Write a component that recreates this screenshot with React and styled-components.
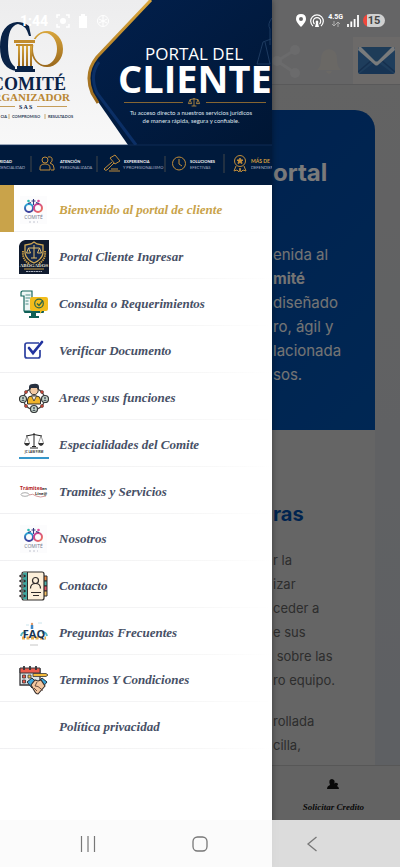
import React, { useState } from "react";
import styled, { createGlobalStyle } from "styled-components";

const GlobalStyle = createGlobalStyle`
  * {
    box-sizing: border-box;
  }
  body {
    margin: 0;
    font-family: "Inter", sans-serif;
  }
  button {
    border: 0;
    padding: 0;
    background: none;
    font: inherit;
    cursor: pointer;
  }
`;

const script = `"Liberation Serif", serif`;

const Screen = styled.div`
  position: relative;
  height: 100vh;
  overflow: hidden;
`;

/* ---------- page under the drawer ---------- */

const Page = styled.div`
  display: flex;
  flex-direction: column;
  height: 100%;
  padding-bottom: 47px;
  background: #c6c6c7;
`;

const Header = styled.header`
  display: flex;
  justify-content: flex-end;
  align-items: center;
  gap: 7px;
  height: 85px;
  padding-top: 37px;
  flex-shrink: 0;
  background: #cacacc;
  border-bottom: 1px solid #b2b2b4;
`;

const HeaderButton = styled.button`
  display: flex;
  align-items: center;
  justify-content: center;
  width: ${(p) => (p.$boxed ? "47px" : "34px")};
  height: 47px;
  background: ${(p) => (p.$boxed ? "#d8d4d2" : "none")};
`;

const Main = styled.main`
  flex: 1;
  min-height: 0;
  overflow: hidden;
  padding: 25px 25px 0;
  background: linear-gradient(#c6c6c7, #bcc0c6);
`;

/* both sections keep their text in the strip beside the drawer */
const Hero = styled.section`
  min-height: 320px;
  padding: 44px 0 0 calc(68vw - 24px);
  border-radius: 20px 20px 0 0;
  background: linear-gradient(135deg, #003f98, #004fa8);
  color: #e8e8e8;
`;

const HeroTitle = styled.h1`
  margin: 0 0 51px;
  font-size: 24px;
  line-height: 38px;
  color: #f4f4f4;
`;

const HeroText = styled.p`
  margin: 0;
  font-size: 15px;
  line-height: 24px;
`;

const Line = styled.span`
  display: block;
  white-space: pre;
`;

const Article = styled.section`
  min-height: 600px;
  padding: 68px 0 0 calc(68vw - 24px);
  background: #cacaca;
  color: #5a5a5a;
`;

const ArticleTitle = styled.h2`
  margin: 0 0 18px;
  font-size: 20px;
  line-height: 32px;
  color: #00499f;
`;

const ArticleText = styled.p`
  margin: 0 0 17px;
  font-size: 13px;
  line-height: 24px;
`;

const BottomNav = styled.nav`
  display: grid;
  grid-template-columns: repeat(3, 1fr);
  height: 55px;
  flex-shrink: 0;
  background: #c6c6c6;
  border-top: 1px solid #aeaeae;
`;

const BottomLink = styled.a`
  grid-column: 3;
  display: flex;
  flex-direction: column;
  align-items: center;
  gap: 12px;
  padding-top: 13px;
  font-family: ${script};
  font-size: 9px;
  font-weight: bold;
  font-style: italic;
  line-height: 12px;
  color: #101010;
  text-decoration: none;
`;

const Backdrop = styled.div`
  position: absolute;
  inset: 0;
  background: rgba(0, 0, 0, 0.5);
`;

/* ---------- drawer ---------- */

const Drawer = styled.aside`
  position: absolute;
  top: 0;
  bottom: 0;
  left: 0;
  width: 68%;
  overflow: hidden;
  background: #fff;
  box-shadow: 0 0 6px rgba(0, 0, 0, 0.4);
`;

const Banner = styled.svg`
  display: block;
  width: 100%;
  height: 185px;
`;

const Menu = styled.ul`
  list-style: none;
  margin: 0;
  padding: 0;
`;

const MenuItem = styled.li`
  height: 47px;
  border-left: 14px solid ${(p) => (p.$active ? "#c9a34a" : "transparent")};
  background: linear-gradient(90deg, #f0f0f2, #f6f6f6 70%, #fff) bottom / 100% 1px
    no-repeat border-box;
`;

const MenuLink = styled.a`
  display: flex;
  align-items: center;
  gap: 10px;
  height: 100%;
  padding: 2px 0 0 5px;
  font-family: ${script};
  font-size: 13px;
  font-weight: bold;
  font-style: italic;
  line-height: 20px;
  color: ${(p) => (p.$active ? "#c9a34a" : "#475066")};
  text-decoration: none;
  white-space: nowrap;
`;

const IconBox = styled.span`
  display: flex;
  width: 30px;
  height: 34px;
  align-items: center;
  flex-shrink: 0;
  font-style: normal;
  font-weight: normal;
`;

/* ---------- device bars ---------- */

const StatusBar = styled.div`
  position: absolute;
  top: 0;
  left: 0;
  right: 0;
  display: flex;
  align-items: center;
  justify-content: space-between;
  height: 41px;
  padding: 0 15px 0 20px;
  color: #fff;
`;

const StatusGroup = styled.div`
  display: flex;
  align-items: center;
  gap: ${(p) => p.$gap}px;
`;

const Clock = styled.span`
  font-family: "Roboto", sans-serif;
  font-size: 14px;
  font-weight: bold;
`;

const Network = styled.span`
  display: flex;
  flex-direction: column;
  align-items: center;
  font-family: "Roboto", sans-serif;
  font-size: 7px;
  font-weight: bold;
  line-height: 7px;
`;

const Battery = styled.span`
  width: 22px;
  height: 13px;
  border-radius: 7px;
  background: linear-gradient(90deg, #f0473c 4px, #d0d0d0 4px);
  color: #444;
  font-family: "Roboto", sans-serif;
  font-size: 11px;
  font-weight: bold;
  line-height: 13px;
  text-align: center;
`;

const SystemNav = styled.div`
  position: absolute;
  left: 0;
  right: 0;
  bottom: 0;
  display: flex;
  align-items: center;
  justify-content: space-around;
  height: 47px;
  padding: 0 32px;
  background: rgba(250, 250, 250, 0.8);
`;

const SystemButton = styled.button`
  display: flex;
  align-items: center;
  justify-content: center;
  width: 48px;
  height: 47px;
`;

/* ---------- menu pictures ---------- */

const Svg = ({ children, size = 30, h }) => (
  <svg width={size} height={h || size} viewBox={`0 0 ${size} ${h || size}`} fill="none" aria-hidden="true">
    {children}
  </svg>
);

const ComiteIcon = () => (
  <Svg>
    <defs>
      <linearGradient id="cg1" x1="0" x2="0" y1="0" y2="1">
        <stop offset="0" stopColor="#2aa9d8" />
        <stop offset="1" stopColor="#3d3a98" />
      </linearGradient>
      <linearGradient id="cg2" x1="0" x2="1" y1="0" y2="1">
        <stop offset="0" stopColor="#c0389e" />
        <stop offset="1" stopColor="#f0745a" />
      </linearGradient>
    </defs>
    <rect x="1" y="1" width="27" height="28" fill="#fcfcfd" />
    <circle cx="10" cy="13" r="4" stroke="url(#cg1)" strokeWidth="2" />
    <circle cx="19" cy="13" r="4" stroke="url(#cg2)" strokeWidth="2" />
    <circle cx="9.500" cy="6" r="1.300" fill="#2cb8b0" />
    <circle cx="19.500" cy="6" r="1.300" fill="#e04a9c" />
    <path d="M14.500 4v6M12.500 6h4M9 8.500l3-1M20 8.500l-3-1" stroke="#343a80" strokeWidth="1.100" />
    <text x="14.500" y="23.500" textAnchor="middle" fontFamily="Open Sans" fontSize="5" fill="#70758a">COMITÉ</text>
    <path d="M10 27h2M14 27h2M18 27h1" stroke="#b4b8c4" strokeWidth=".8" />
  </Svg>
);

const AbogadosIcon = () => (
  <Svg h={34}>
    <path d="M6 0h24v34H0V6q1-5 6-6z" fill="#101b2e" />
    <path d="M15 2l3 2 6 1v7q0 7-9 11-9-4-9-11V5l6-1z" fill="#14284b" stroke="#d2aa54" strokeWidth="1.300" />
    <path d="M15 5v13M9.500 8h11M12 18h6M9.500 8l-2 5h4zM20.500 8l-2 5h4z" stroke="#e0bd6a" strokeWidth="1" />
    <path d="M4 11q-1 9 7 13M26 11q1 9-7 13" stroke="#c79c44" strokeWidth="2" strokeDasharray="1.500 .7" />
    <text x="15" y="27" textAnchor="middle" fontFamily="Liberation Serif" fontWeight="bold" fontSize="5" fill="#e7e1d0">ABOGADOS</text>
    <path d="M5 29h20" stroke="#c79c44" />
    <path d="M7 31.500h16" stroke="#aab0bc" strokeDasharray="2 .5" />
  </Svg>
);

const ConsultaIcon = () => (
  <Svg>
    <path d="M5 10v13q0 1 1 1h18q1 0 1-1v-2H5z" fill="#0f5f55" />
    <path d="M12 24h5v3h3v2h-10v-2h2z" fill="#0f5f55" />
    <path d="M3 2h10v20H5V7H2V4q0-2 2-2z" fill="#eef6f5" stroke="#16675e" strokeWidth="1.200" />
    <path d="M6.500 6h5M6.500 9h5M6.500 12h3M6.500 15h3" stroke="#4a8d86" />
    <path d="M13 8h14q2 0 2 2v10q0 2-2 2h-4l-2 3v-3h-8q-2 0-2-2V10q0-2 2-2z" fill="#f2bc1b" />
    <circle cx="20" cy="14.500" r="4.300" stroke="#2e6647" strokeWidth="1.200" />
    <path d="M18 14.500l2 2 4-5" stroke="#2e6647" strokeWidth="1.400" />
  </Svg>
);

const VerificarIcon = () => (
  <Svg>
    <path d="M20 7H8q-2 0-2 2v11q0 2 2 2h11q2 0 2-2v-6" stroke="#2b3fa0" strokeWidth="1.700" />
    <path d="M10 12l4 5 9-11" stroke="#2234a0" strokeWidth="2.700" strokeLinecap="round" />
  </Svg>
);

const AreasIcon = () => (
  <Svg>
    <circle cx="15" cy="16" r="10.500" stroke="#42423f" strokeWidth="1.200" />
    <path d="M8.500 21v-4q0-4 4-4h5q4 0 4 4v4z" fill="#f0b429" stroke="#33302a" />
    <path d="M12.500 13l2.500 5 2.500-5z" fill="#f7eee0" stroke="#33302a" strokeWidth=".8" />
    <circle cx="15" cy="7.500" r="4.200" fill="#f3c9a2" stroke="#33302a" />
    <path d="M10 7V4q0-3 4-3 6-1 6 3v3l-2-2h-6z" fill="#27303f" />
    {[[4, 16], [26, 16], [15, 26]].map(([x, y]) => (
      <g key={x}>
        <circle cx={x} cy={y} r="3.500" fill="#c4d4c8" stroke="#35393a" strokeWidth="1.200" />
        <circle cx={x} cy={y - 1} r="1" fill="#4b5560" />
        <path d={`M${x - 1.8} ${y + 2}q1.800-3 3.600 0`} fill="#4b5560" />
      </g>
    ))}
    {[[7, 9], [23, 9], [7, 23], [23, 23]].map(([x, y]) => (
      <circle key={`${x}-${y}`} cx={x} cy={y} r="1.500" fill="#d94a3a" stroke="#4a302c" strokeWidth=".6" />
    ))}
  </Svg>
);

const EspecialidadesIcon = () => (
  <Svg>
    <path d="M15 3v14M7 6q8-3 16 0M11 18h8M13 16.500h4" stroke="#222" strokeWidth="1" />
    <path d="M8 6L5.500 13M8 6l2.500 7M22 6l-2.500 7M22 6l2.500 7" stroke="#555" strokeWidth=".6" />
    <path d="M5 13h6q-1 3-3 3t-3-3zM19 13h6q-1 3-3 3t-3-3z" fill="#333" />
    <text x="15" y="23" textAnchor="middle" fontFamily="Open Sans" fontSize="3" fontWeight="bold" fill="#333">JC LAW FIRM</text>
    <path d="M0 28h30" stroke="#3697cb" strokeWidth="2" />
  </Svg>
);

const TramitesIcon = () => (
  <Svg>
    <text x="1" y="13" fontFamily="Open Sans" fontSize="5" fontWeight="bold" fill="#b32222">Trámites</text>
    <text x="23" y="13" fontFamily="Open Sans" fontSize="4" fontWeight="bold" fill="#262626">en</text>
    <text x="16" y="18" fontFamily="Open Sans" fontSize="4" fontWeight="bold" fill="#262626">Líne@</text>
    <ellipse cx="6" cy="17.500" rx="4" ry="1.800" stroke="#a3a3a3" strokeWidth=".9" />
    <path d="M10 18q4-2 7 1 4 2 10 0" stroke="#cf8f8f" strokeWidth=".9" />
  </Svg>
);

const ContactoIcon = () => (
  <Svg>
    <path d="M24 5h4v5h-4z" fill="#ed8b42" stroke="#2f2c2b" />
    <path d="M24 10h4v5h-4z" fill="#4db0a9" stroke="#2f2c2b" />
    <path d="M24 15h4v5h-4z" fill="#e65464" stroke="#2f2c2b" />
    <path d="M24 20h4v5h-4z" fill="#f2bd62" stroke="#2f2c2b" />
    <path d="M5 1h18q2 0 2 2v24q0 2-2 2H5q-2 0-2-2V3q0-2 2-2z" fill="#fdf0da" stroke="#2f2c2b" strokeWidth="1.200" />
    <path d="M4 1.600h4v26.800H4z" fill="#3fa79f" />
    <path d="M8.500 1v28" stroke="#2f2c2b" />
    <path d="M1.500 5h4M1.500 10h4M1.500 15h4M1.500 20h4M1.500 25h4" stroke="#2f2c2b" strokeWidth="2.400" strokeLinecap="round" />
    <path d="M2 5h3M2 10h3M2 15h3M2 20h3M2 25h3" stroke="#a9d7d2" strokeWidth=".8" />
    <circle cx="16.500" cy="9.500" r="3" stroke="#2f2c2b" strokeWidth="1.200" />
    <path d="M11.500 17.500q0-5 5-5t5 5M12 21.500h10M14 24.500h6" stroke="#2f2c2b" strokeWidth="1.200" />
  </Svg>
);

const FaqIcon = () => (
  <Svg>
    <path d="M2 18q1-5 5-3M28 18q-1-5-5-3" stroke="#58b7c5" strokeWidth="2" />
    <path d="M3 20h24" stroke="#e8ad4c" strokeWidth="3" strokeDasharray="3 1.500" />
    <circle cx="13" cy="6" r="1.200" fill="#e09a6a" />
    <path d="M13 7v4" stroke="#3d87c6" strokeWidth="2.500" />
    <path d="M7 7h3M19 5h4" stroke="#cbe4ec" />
    <text x="15" y="20" textAnchor="middle" fontFamily="Open Sans" fontWeight="bold" fontSize="11" fill="#193454">FAQ</text>
    <path d="M11 27h8" stroke="#b8b8b8" strokeWidth=".8" />
  </Svg>
);

const TerminosIcon = () => (
  <Svg>
    <path d="M1 4h20v16H1z" fill="#dfe5e8" stroke="#37373b" strokeWidth="1.300" />
    <path d="M1 3h20v5H1z" fill="#ec5b4c" stroke="#37373b" />
    <path d="M5 1v4M11 1v4M17 1v4" stroke="#37373b" strokeWidth="1.800" />
    <path d="M3.500 10h3v3h-3zM3.500 15h3v3h-3z" fill="#e8584a" stroke="#37373b" strokeWidth=".8" />
    <path d="M9 10h3v3H9z" fill="#f6c650" stroke="#37373b" strokeWidth=".8" />
    <path d="M14 8.500h13l2 1.500-2 1.500H14z" fill="#f2b93a" stroke="#37373b" strokeWidth=".8" />
    <path d="M8 17l5-4 4 4-4 6zM28 17l-5-4-4 4 4 6z" fill="#3ba6db" stroke="#27313a" />
    <path d="M12 20l4-5 3 1 3-1 4 6-7 8q-2 0-3-2z" fill="#f3c7a0" stroke="#37302e" strokeWidth="1.100" />
    <path d="M18 17l-2 4 3 .5 5 4M15 23l3 3" stroke="#5b4237" strokeWidth=".9" />
  </Svg>
);

const Scales = ({ x, y, s = 1, color, w = 1 }) => (
  <g transform={`translate(${x} ${y}) scale(${s})`} stroke={color} strokeWidth={w} fill="none">
    <path d="M0-5v10M-3 5h6M-5-3q5-2 10 0M-5-3l-2 5h4zM5-3l-2 5h4z" />
  </g>
);

const BannerArt = () => (
  <Banner viewBox="0 0 272 185" preserveAspectRatio="xMinYMin slice" role="img" aria-label="Comité Organizador, Portal del Cliente">
    <defs>
      <linearGradient id="navy" x1="0" y1="0" x2="1" y2="1">
        <stop offset="0" stopColor="#02204d" />
        <stop offset="1" stopColor="#001634" />
      </linearGradient>
      <linearGradient id="paper" x1="0" y1="0" x2="0" y2="1">
        <stop offset="0" stopColor="#ededee" />
        <stop offset="1" stopColor="#fbfbfb" />
      </linearGradient>
      <linearGradient id="gold" x1="0" y1="0" x2="0" y2="1">
        <stop offset="0" stopColor="#d9a63c" />
        <stop offset="1" stopColor="#9a681c" />
      </linearGradient>
    </defs>
    <rect width="272" height="185" fill="url(#paper)" />
    <path d="M151 0L97 57Q84 73 92 93L128 145H272V0z" fill="url(#navy)" />
    <path d="M99 62Q89 75 97 93L136 145" fill="none" stroke="#0b2f66" strokeWidth="3" />
    <path d="M151 0L97 57Q84 73 92 93L98 103" fill="none" stroke="url(#gold)" strokeWidth="3" />
    <g fill="none" stroke="#1d3a60" strokeWidth="1">
      <path d="M272 18q-5 6-2 11v16M263 42l-6 22h13l-5-22M263 42l8-3" />
    </g>

    {/* logo */}
    <path d="M31 36L29 26Q24 22 17 22 0 24 0 47 0 69 17 71V68Q8 64 8 46 8 26 18 24 26 25 29 36z" fill="#0a2347" />
    <path d="M47 31a16 18 0 010 36 16 18 0 010-36zM45 33a12 16 0 000 32 12 16 0 000-32z" fill="url(#gold)" fillRule="evenodd" />
    <path d="M14 39h22l-2 6h-2v22h3v5H15v-5h3V45h-2z" fill="#f1f1f2" />
    <path d="M14 40h21v3H14zM16 44h17v2H16z" fill="#c18b2d" />
    <path d="M19 46v20M23 46v20M27 46v20M31 46v20" stroke="url(#gold)" strokeWidth="2" />
    <path d="M17 66h16v3h2v3H15v-3h2z" fill="#0a2347" />
    <g fontFamily="Liberation Serif">
      <text x="66" y="90" textAnchor="end" fontSize="18" fontWeight="bold" fill="#0a2347">COMITÉ</text>
      <text x="70" y="101" textAnchor="end" fontSize="11" fontWeight="bold" fill="#b98632">RGANIZADOR</text>
      <text x="19" y="109" fontSize="6" fontWeight="bold" fill="#0a2347">S A S</text>
    </g>
    <path d="M0 106.500h15M37 106.500h30" stroke="#b98632" strokeWidth=".8" />
    <g fontFamily="Lato" fontSize="4" fontWeight="bold" fill="#2c3b55">
      <text x="7" y="118" textAnchor="end">CIA</text>
      <text x="12" y="118">COMPROMISO</text>
      <text x="48" y="118">RESULTADOS</text>
      <path d="M9 114v5M45 114v5" stroke="#b98632" strokeWidth=".7" />
    </g>

    <g fontFamily="Open Sans" fill="#fff">
      <text x="145" y="60" fontSize="17" fontWeight="500">PORTAL DEL</text>
      <text x="118" y="93" fontSize="38" fontWeight="bold">CLIENTE</text>
    </g>
    <g fontFamily="Lato" fontSize="6" fill="#dfe4ee" textAnchor="middle">
      <text x="191" y="115">Tu acceso directo a nuestros servicios jurídicos</text>
      <text x="191" y="123">de manera rápida, segura y confiable.</text>
    </g>
    <path d="M124 102.500h59M206 102.500h60" stroke="#a87a30" strokeWidth=".8" />
    <Scales x={194} y={102} s={0.8} color="#c89540" />

    {/* strip with the services */}
    <rect y="145" width="272" height="40" fill="#001a3c" />
    <path d="M0 145h272" stroke="#13315a" strokeWidth=".8" />
    <path d="M31 156v16M97 156v16M165 156v16M224 154v19" stroke="#53534b" strokeWidth=".8" />
    <g fill="none" stroke="#c08c3a" strokeWidth="1">
      <circle cx="45" cy="160" r="3" />
      <path d="M40 170v-2q0-4 5-4t5 4v2zM48 157q5-1 4 4-1 2-2 2 4 1 4 5v2h-3" />
      <path d="M110 158l5-3 5 6-5 3zM112 162l-8 7q1 2 3 1l7-7M109 171h11M111 169h7" />
      <circle cx="179" cy="163.500" r="6.500" />
      <path d="M179 159v5l3 2" />
      <circle cx="240" cy="161" r="5.500" />
      <path d="M236 166l-2 5 3-1 2 2 1-4 1 4 2-2 3 1-2-5" />
      <path d="M240 158l1 2h2l-1.500 1.500.5 2-2-1-2 1 .5-2L237 160h2z" fill="#c08c3a" />
    </g>
    <g fontFamily="Lato" fontSize="4" fill="#aab4c6">
      <g fontWeight="bold" fill="#f3f5f8">
        <text x="12" y="163" textAnchor="end">RIDAD</text>
        <text x="60" y="163">ATENCIÓN</text>
        <text x="124" y="163">EXPERIENCIA</text>
        <text x="190" y="163">SOLUCIONES</text>
        <text x="251" y="163" fontSize="5" fill="#dda33c">MÁS DE</text>
      </g>
      <text x="25" y="169" textAnchor="end">DENCIALIDAD</text>
      <text x="60" y="169">PERSONALIZADA</text>
      <text x="123" y="169">Y PROFESIONALISMO</text>
      <text x="190" y="169">EFECTIVAS</text>
      <text x="251" y="169">DEFENDIEN</text>
    </g>
  </Banner>
);

const items = [
  { label: "Bienvenido al portal de cliente", icon: <ComiteIcon /> },
  { label: "Portal Cliente Ingresar", icon: <AbogadosIcon /> },
  { label: "Consulta o Requerimientos", icon: <ConsultaIcon /> },
  { label: "Verificar Documento", icon: <VerificarIcon /> },
  { label: "Areas y sus funciones", icon: <AreasIcon /> },
  { label: "Especialidades del Comite", icon: <EspecialidadesIcon /> },
  { label: "Tramites y Servicios", icon: <TramitesIcon /> },
  { label: "Nosotros", icon: <ComiteIcon /> },
  { label: "Contacto", icon: <ContactoIcon /> },
  { label: "Preguntas Frecuentes", icon: <FaqIcon /> },
  { label: "Terminos Y Condiciones", icon: <TerminosIcon /> },
  { label: "Política privacidad", icon: null },
];

function App() {
  const [active, setActive] = useState(0);

  return (
    <Screen>
      <GlobalStyle />
      <Page>
        <Header>
          <HeaderButton aria-label="Compartir">
            <Svg size={34}>
              <path d="M6 17L24 6M6 17l18 12" stroke="#d6d6d8" strokeWidth="3" />
              <circle cx="6" cy="17" r="5" fill="#d6d6d8" />
              <circle cx="24" cy="6" r="5" fill="#d6d6d8" />
              <circle cx="24" cy="29" r="5" fill="#d6d6d8" />
            </Svg>
          </HeaderButton>
          <HeaderButton aria-label="Notificaciones">
            <Svg size={28}>
              <path d="M14 2q8 1 8 10 0 8 4 11H2q4-3 4-11 0-9 8-10zM11 24h6q-1 3-3 3t-3-3z" fill="#d4d0cb" />
            </Svg>
          </HeaderButton>
          <HeaderButton $boxed aria-label="Mensajes">
            <Svg size={37} h={27}>
              <rect width="37" height="27" rx="2" fill="#3c7ab8" />
              <path d="M0 25l14-12M37 25L23 13" stroke="#2b5f9c" strokeWidth="1.500" />
              <path d="M1 27l17-13 18 13z" fill="#2e68a8" />
              <path d="M1 0h35l1 3-17 15q-1.500 1-3 0L0 3z" fill="#f2f6f8" />
              <path d="M3 0h31L20 14q-1.500 1-3 0z" fill="#3d78b0" />
            </Svg>
          </HeaderButton>
        </Header>
        <Main>
          <Hero>
            <HeroTitle>ortal</HeroTitle>
            <HeroText>
              <Line>enida al</Line>
              <Line>
                <b>mité</b>
              </Line>
              <Line>diseñado</Line>
              <Line>ro, ágil y</Line>
              <Line>lacionada</Line>
              <Line>sos.</Line>
            </HeroText>
          </Hero>
          <Article>
            <ArticleTitle>ras</ArticleTitle>
            <ArticleText>
              <Line>r la</Line>
              <Line>izar</Line>
              <Line>ceder a</Line>
              <Line>e sus</Line>
              <Line> sobre las</Line>
              <Line>ro equipo.</Line>
            </ArticleText>
            <ArticleText>
              <Line>rollada</Line>
              <Line>cilla,</Line>
            </ArticleText>
          </Article>
        </Main>
        <BottomNav>
          <BottomLink href="#credito">
            <Svg size={12} h={10}>
              <path d="M0 10q0-3 3-4Q1 0 5 0q4 1 2 5 1-2 3-1 2 1 0 3 2 1 2 3z" fill="#101010" />
            </Svg>
            Solicitar Credito
          </BottomLink>
        </BottomNav>
      </Page>
      <Backdrop />
      <Drawer>
        <BannerArt />
        <Menu>
          {items.map((item, i) => (
            <MenuItem key={item.label} $active={i === active}>
              <MenuLink href="#menu" $active={i === active} onClick={() => setActive(i)}>
                <IconBox>{item.icon}</IconBox>
                {item.label}
              </MenuLink>
            </MenuItem>
          ))}
        </Menu>
      </Drawer>
      <StatusBar>
        <StatusGroup $gap={8}>
          <Clock>1:44</Clock>
          <Svg size={14}>
            <path d="M1 4V1h3M10 1h3v3M13 10v3h-3M4 13H1v-3" stroke="#fff" strokeWidth="1.500" />
            <circle cx="7" cy="7" r="3" fill="#fff" />
          </Svg>
          <Svg size={10} h={14}>
            <path d="M3 0h4v2h2v12H1V2h2z" fill="#fff" />
          </Svg>
          <Svg size={14}>
            <circle cx="7" cy="7" r="5.500" stroke="#fff" />
            <path d="M3 5l8 4M11 5l-8 4M7 2v10" stroke="#fff" />
          </Svg>
        </StatusGroup>
        <StatusGroup $gap={4}>
          <Svg size={10} h={13}>
            <path d="M5 0q5 0 5 5 0 3-5 8-5-5-5-8 0-5 5-5zm0 3a2 2 0 100 4 2 2 0 000-4z" fill="#fff" fillRule="evenodd" />
          </Svg>
          <Svg size={14}>
            <path d="M3 12A6.300 6.300 0 1111 12" stroke="#fff" strokeWidth="1.200" />
            <path d="M4.500 10A3.700 3.700 0 119.500 10" stroke="#fff" strokeWidth="1.200" />
            <path d="M7 6.500a1.500 1.500 0 011 2.500l1 4H5l1-4a1.500 1.500 0 011-2.500z" fill="#fff" />
          </Svg>
          <Network>
            4.5G
            <Svg size={10} h={6}>
              <path d="M3 0v5M1 3l2 2 2-2M7 6V1M5 3l2-2 2 2" stroke="#b4b4b4" strokeWidth=".9" />
            </Svg>
          </Network>
          <Svg size={12}>
            <path d="M1 12V9M4.300 12V6.500M7.600 12V4M11 12V0" stroke="#fff" strokeWidth="1.800" />
          </Svg>
          <Battery>15</Battery>
        </StatusGroup>
      </StatusBar>
      <SystemNav>
        <SystemButton aria-label="Recientes">
          <Svg size={16}>
            <path d="M1.500 0v16M8 0v16M14.500 0v16" stroke="#777" strokeWidth="1.200" />
          </Svg>
        </SystemButton>
        <SystemButton aria-label="Inicio">
          <Svg size={16}>
            <rect x="1" y="1" width="14" height="14" rx="4.500" stroke="#777" strokeWidth="1.300" />
          </Svg>
        </SystemButton>
        <SystemButton aria-label="Atrás">
          <Svg size={16}>
            <path d="M12.500 1L4 8l8.500 7" stroke="#777" strokeWidth="1.300" />
          </Svg>
        </SystemButton>
      </SystemNav>
    </Screen>
  );
}

export default App;
